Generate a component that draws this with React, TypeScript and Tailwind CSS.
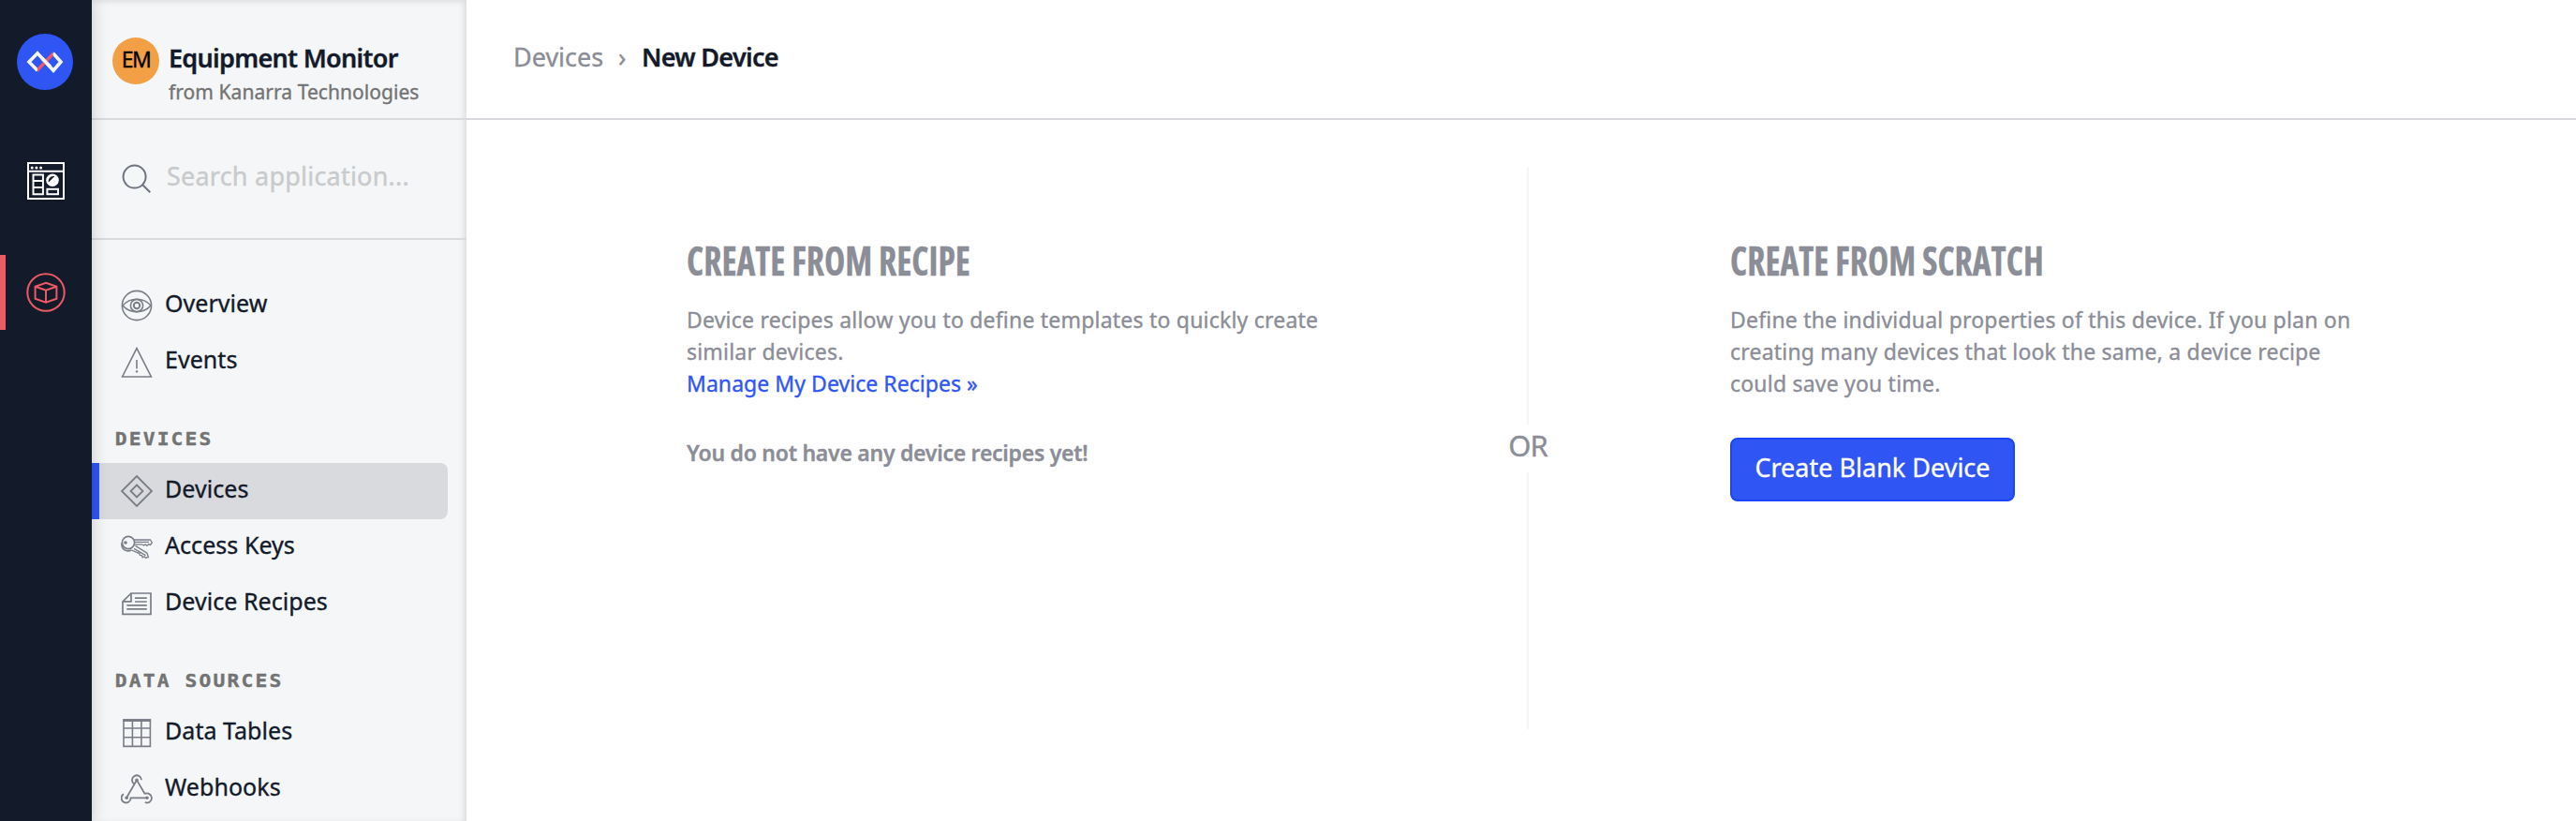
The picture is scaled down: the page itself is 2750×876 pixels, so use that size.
import type { ReactNode } from "react";

function LogoIcon() {
  return (
    <svg width="60" height="60" viewBox="0 0 60 60" fill="none">
      <circle cx="30" cy="30" r="30" fill="#2f55f5" />
      <path d="M22 39.2 13 30l9-9.2 17 18.4 8-9.2-8.4-9.2" stroke="#f4f5f7" strokeWidth="3.6" />
      <path d="M22 36.2 38.6 19v5L22 41.2Z" fill="#ec5a65" />
      <path d="m27 26.2 8.5 8.8" stroke="#f4f5f7" strokeWidth="3.6" />
    </svg>
  );
}

function DashboardIcon() {
  return (
    <svg width="40" height="40" viewBox="0 0 40 40" fill="none" stroke="#fff" strokeWidth="2">
      <rect x="1" y="1" width="38" height="38" />
      <path d="M1 9.7h38" />
      <g fill="#fff" stroke="none">
        <circle cx="5.2" cy="6" r="1.5" />
        <circle cx="9.9" cy="6" r="1.5" />
        <circle cx="14.6" cy="6" r="1.5" />
      </g>
      <path d="M6.5 13.5h10.4v20.7H6.5ZM6.5 20h10.4M6.5 27h10.4" />
      <circle cx="27" cy="19.3" r="6.8" fill="#fff" stroke="none" />
      <path d="m22.8 21.5 6.4-6.2c-3.4-1.4-7.4 2.3-6.4 6.2Z" fill="#131a29" stroke="none" />
      <rect x="21.4" y="28.8" width="11.6" height="5.4" />
    </svg>
  );
}

function CubeIcon() {
  return (
    <svg width="42" height="42" viewBox="0 0 42 42" fill="none" stroke="#ec5a65" strokeWidth="2">
      <circle cx="21" cy="21" r="19.7" />
      <path d="m21 10.7 11.4 4v13L21 31.7l-11.4-4v-13ZM9.6 14.7l11.4 4 11.4-4M21 18.7v13" />
    </svg>
  );
}

function Icon({ children }: { children: ReactNode }) {
  return (
    <svg
      width="34"
      height="34"
      viewBox="0 0 34 34"
      fill="none"
      stroke="#7a7d86"
      strokeWidth="1.6"
      className="shrink-0"
    >
      {children}
    </svg>
  );
}

const icons = {
  eye: (
    <Icon>
      <circle cx="17" cy="17" r="15.6" />
      <path d="M2 17c8-9 22-9 30 0-8 9-22 9-30 0Z" />
      <circle cx="17" cy="17" r="6.6" />
      <circle cx="17" cy="17" r="3.2" strokeWidth="2" />
    </Icon>
  ),
  warning: (
    <Icon>
      <path d="M17 2.6 32.4 33H1.6ZM17 15v9.5" />
      <circle cx="17" cy="27.4" r="1.2" fill="#7a7d86" stroke="none" />
    </Icon>
  ),
  diamond: (
    <Icon>
      <path d="m17 1 16 16-16 16L1 17ZM17 10.5l6.5 6.5-6.5 6.5-6.5-6.5Z" strokeWidth="1.8" />
    </Icon>
  ),
  keys: (
    <Icon>
      <circle cx="8" cy="12" r="6.6" />
      <circle cx="5" cy="12" r="1.8" fill="#7a7d86" stroke="none" />
      <path d="M1 12c-.8 7 4.4 10.6 10.4 8" />
      <path
        d="M14 9h17.4l2 3-1.8 2.4-2-.8-1.6 1.8-1.8-1.6-1.6 1.2-2-1.2H14.2M15 11.3h15"
        strokeWidth="1.3"
      />
      <path
        d="m15.6 15.4 12.4 7.8 1.4 4.4-3 .6-1.4-1.4-1.8 1-.8-2.2-2-.2-.6-1.8L11.4 20M14 18.4l12.5 7.2"
        strokeWidth="1.3"
      />
    </Icon>
  ),
  recipe: (
    <Icon>
      <path
        d="M11 6h21v22.3H2V14.8ZM11 6v8.8H2M15 11.1h12.8M15 15h12.8M6.3 18.8h21.5M6.3 22.8h21.5"
        strokeWidth="1.7"
      />
    </Icon>
  ),
  table: (
    <Icon>
      <path d="M3 3h28.4v28.4H3ZM12.4 3v28.4M21.9 3v28.4M3 12h28.4M3 21.7h28.4" />
      <path d="M2.3 3.6h29.8" strokeWidth="2.8" />
    </Icon>
  ),
  webhook: (
    <Icon>
      <path
        d="M22 7.2A5 5 0 1 0 14 11.3M17 7.4 6.2 26M17 7.4l8.6 14.6M25.4 22.2a5 5 0 1 1 .4 8.8M3 22.2a5 5 0 1 0 7.6 4.2H28"
        strokeWidth="1.8"
      />
      <g fill="#7a7d86" stroke="none">
        <circle cx="17" cy="7.4" r="1.8" />
        <circle cx="6.2" cy="26.3" r="1.8" />
        <circle cx="28" cy="26.3" r="1.8" />
      </g>
    </Icon>
  ),
};

function NavItem({ icon, label, active }: { icon: ReactNode; label: string; active?: boolean }) {
  return (
    <a
      className={
        active
          ? "mr-5 flex h-[60px] items-center rounded-r-lg border-l-8 border-[#2f55f5] bg-[#d9dadd] pl-[23px]"
          : "mr-5 flex h-[60px] items-center pl-[31px]"
      }
    >
      {icon}
      <span className="ml-[13px] pb-[5px] text-[25px] leading-[39px] tracking-[0.05px] text-[#131a29]">
        {label}
      </span>
    </a>
  );
}

function NavLabel({ children }: { children: ReactNode }) {
  return (
    <h2 className="origin-left scale-x-[1.12] pl-[22px] font-['DejaVu_Sans_Mono',monospace] text-[19px] leading-[24px] font-bold tracking-[1.95px] whitespace-nowrap text-[#737373]">
      {children}
    </h2>
  );
}

function ColumnTitle({ children }: { children: ReactNode }) {
  return (
    <h1 className="origin-left scale-x-[0.895] font-['Open_Sans',sans-serif] text-[42px] leading-[50px] font-bold whitespace-nowrap text-[#8b8d97] [font-stretch:75%]">
      {children}
    </h1>
  );
}

export default function App() {
  return (
    <div className="flex h-[876px] w-[2750px] overflow-hidden bg-white font-['Noto_Sans',sans-serif] [-webkit-text-stroke:0.35px]">
      <aside className="z-10 flex w-[98px] shrink-0 flex-col bg-[#131a29] pt-9 shadow-[0_0_18px_rgba(0,0,0,0.18)]">
        <a className="ml-[18px]">
          <LogoIcon />
        </a>
        <a className="mt-[77px] ml-[29px]">
          <DashboardIcon />
        </a>
        <a className="mt-[59px] flex h-20 items-center border-l-[6px] border-[#ec5a65] pl-[22px]">
          <CubeIcon />
        </a>
      </aside>

      <nav className="flex w-[400px] shrink-0 flex-col bg-[#f4f6f8] shadow-[inset_-3px_2px_6px_rgba(0,0,0,0.1)]">
        <header className="flex h-32 shrink-0 border-b-2 border-[#d9dadd] pl-[22px]">
          <div className="mt-10 flex size-[50px] items-center justify-center rounded-full bg-[#f39f46] pb-[4px] text-[23px] tracking-[-1.5px] text-black">
            EM
          </div>
          <div className="ml-[10px] pt-[42px] whitespace-nowrap">
            <div className="text-[27px] leading-[40px] font-semibold tracking-[-0.7px] text-[#131a29]">
              Equipment Monitor
            </div>
            <div className="text-[21px] leading-[32px] tracking-[0.05px] text-[#737373]">
              from Kanarra Technologies
            </div>
          </div>
        </header>

        <div className="flex h-32 shrink-0 items-center border-b-2 border-[#d9dadd] pl-[32px]">
          <svg width="32" height="32" viewBox="0 0 32 32" fill="none" stroke="#6f7580" strokeWidth="2">
            <circle cx="13.6" cy="13.6" r="12" />
            <path d="m22 22 8.3 8.3" />
          </svg>
          <span className="ml-[16px] pb-[6px] text-[27px] leading-[40px] tracking-[0.22px] text-[#c9cacb]">
            Search application...
          </span>
        </div>

        <div className="mt-10">
          <NavItem icon={icons.eye} label="Overview" />
          <NavItem icon={icons.warning} label="Events" />
        </div>
        <div className="mt-[40px]">
          <NavLabel>DEVICES</NavLabel>
          <div className="mt-[14px]">
            <NavItem icon={icons.diamond} label="Devices" active />
            <NavItem icon={icons.keys} label="Access Keys" />
            <NavItem icon={icons.recipe} label="Device Recipes" />
          </div>
        </div>
        <div className="mt-[40px]">
          <NavLabel>DATA SOURCES</NavLabel>
          <div className="mt-[14px]">
            <NavItem icon={icons.table} label="Data Tables" />
            <NavItem icon={icons.webhook} label="Webhooks" />
          </div>
        </div>
      </nav>

      <main className="flex flex-1 flex-col text-[#8b8d97]">
        <header className="flex h-32 shrink-0 border-b-2 border-[#d9d9de] pt-[41px] pl-[50px] text-[27px] leading-[40px]">
          <span className="w-[112px]">Devices</span>
          <span className="w-[25px]">›</span>
          <span className="font-semibold tracking-[-0.7px] text-[#131a29]">New Device</span>
        </header>

        <div className="flex pt-[50px]">
          <section className="w-[1112px] shrink-0 pt-[75px] pl-[235px]">
            <ColumnTitle>CREATE FROM RECIPE</ColumnTitle>
            <p className="mt-[21px] text-[23px] leading-[34px] tracking-[0.21px] whitespace-nowrap">
              Device recipes allow you to define templates to quickly create
              <br />
              similar devices.
              <br />
              <a className="tracking-[0.05px] text-[#2f55f5]">Manage My Device Recipes »</a>
            </p>
            <p className="mt-10 text-[23px] leading-[34px] font-semibold tracking-[-0.26px] whitespace-nowrap">
              You do not have any device recipes yet!
            </p>
          </section>

          <div className="flex h-[600px] w-[42px] shrink-0 flex-col items-center">
            <div className="w-[2px] flex-1 bg-[#f4f5f6]" />
            <div className="h-[51px] text-[31px] leading-[45px] tracking-[-1px]">OR</div>
            <div className="w-[2px] flex-1 bg-[#f4f5f6]" />
          </div>

          <section className="pt-[75px] pl-[195px]">
            <ColumnTitle>CREATE FROM SCRATCH</ColumnTitle>
            <p className="mt-[21px] text-[23px] leading-[34px] tracking-[0.2px] whitespace-nowrap">
              Define the individual properties of this device. If you plan on
              <br />
              creating many devices that look the same, a device recipe
              <br />
              could save you time.
            </p>
            <button className="mt-[41px] flex h-[68px] w-[304px] items-center justify-center rounded-lg border-2 border-[#1b45f7] bg-[#2f55f5] pb-[3px] text-[27px] text-white">
              Create Blank Device
            </button>
          </section>
        </div>
      </main>
    </div>
  );
}
